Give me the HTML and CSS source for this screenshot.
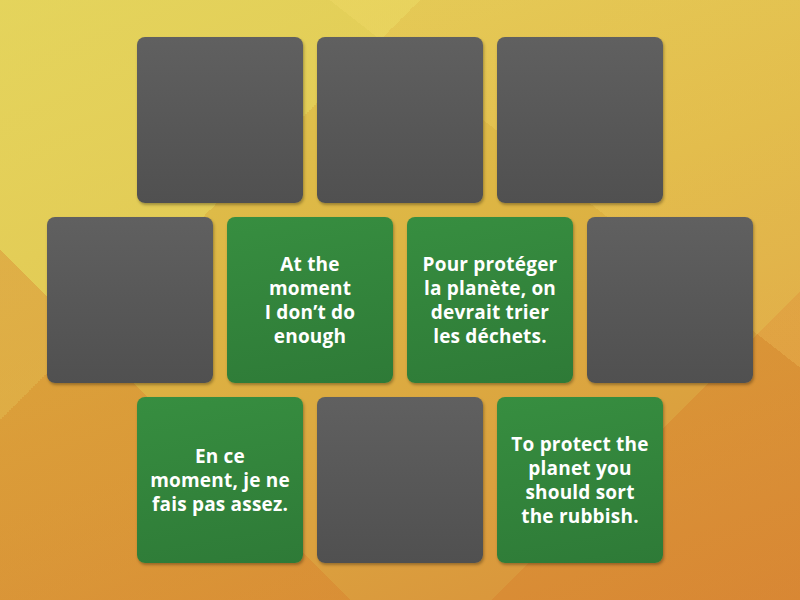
FILE: index.html
```html
<!DOCTYPE html>
<html>
<head>
<meta charset="utf-8">
<link rel="stylesheet" href="styles.css">
</head>
<body>
<div class="board">
  <div class="row">
    <div class="card back"></div>
    <div class="card back"></div>
    <div class="card back"></div>
  </div>
  <div class="row">
    <div class="card back"></div>
    <div class="card face"><span>At the<br>moment<br>I don’t do<br>enough</span></div>
    <div class="card face"><span>Pour protéger<br>la planète, on<br>devrait trier<br>les déchets.</span></div>
    <div class="card back"></div>
  </div>
  <div class="row">
    <div class="card face"><span>En ce<br>moment, je ne<br>fais pas assez.</span></div>
    <div class="card back"></div>
    <div class="card face"><span>To protect the<br>planet you<br>should sort<br>the rubbish.</span></div>
  </div>
</div>
</body>
</html>
```
FILE: styles.css
```css
html, body {
  margin: 0;
  padding: 0;
  width: 800px;
  height: 600px;
  overflow: hidden;
}
body {
  font-family: "Open Sans", "Lato", sans-serif;
  background-color: #dcae40;
  background-image:
    linear-gradient(38deg, rgba(0,0,0,0) 0%, rgba(0,0,0,0) 70%, rgba(255,230,120,0.18) 70%, rgba(255,230,120,0.18) 100%),
    linear-gradient(-45deg, rgba(215,120,40,0.35) 0%, rgba(215,120,40,0.35) 22%, rgba(0,0,0,0) 22%),
    linear-gradient(45deg, rgba(215,120,40,0.35) 0%, rgba(215,120,40,0.35) 25%, rgba(0,0,0,0) 25%),
    linear-gradient(135deg, rgba(230,215,95,0.7) 0%, rgba(230,215,95,0.6) 30%, rgba(0,0,0,0) 30%),
    linear-gradient(160deg, #e0cc55 0%, #ddb443 45%, #d98f3a 100%);
}
.board {
  display: flex;
  flex-direction: column;
  align-items: center;
  gap: 14px;
  padding-top: 37px;
}
.row {
  display: flex;
  gap: 14px;
}
.card {
  width: 166px;
  height: 166px;
  border-radius: 8px;
  box-shadow: 1px 2px 3px rgba(0,0,0,0.3);
  display: flex;
  align-items: center;
  justify-content: center;
  box-sizing: border-box;
  padding: 0 6px;
  text-align: center;
  color: #ffffff;
  font-weight: 700;
  font-size: 19px;
  letter-spacing: 0.2px;
  line-height: 24px;
  white-space: nowrap;
}
.back {
  background: linear-gradient(180deg, #606060 0%, #505050 100%);
}
.face {
  background: linear-gradient(170deg, #378e40 0%, #2e7a37 100%);
}
```
